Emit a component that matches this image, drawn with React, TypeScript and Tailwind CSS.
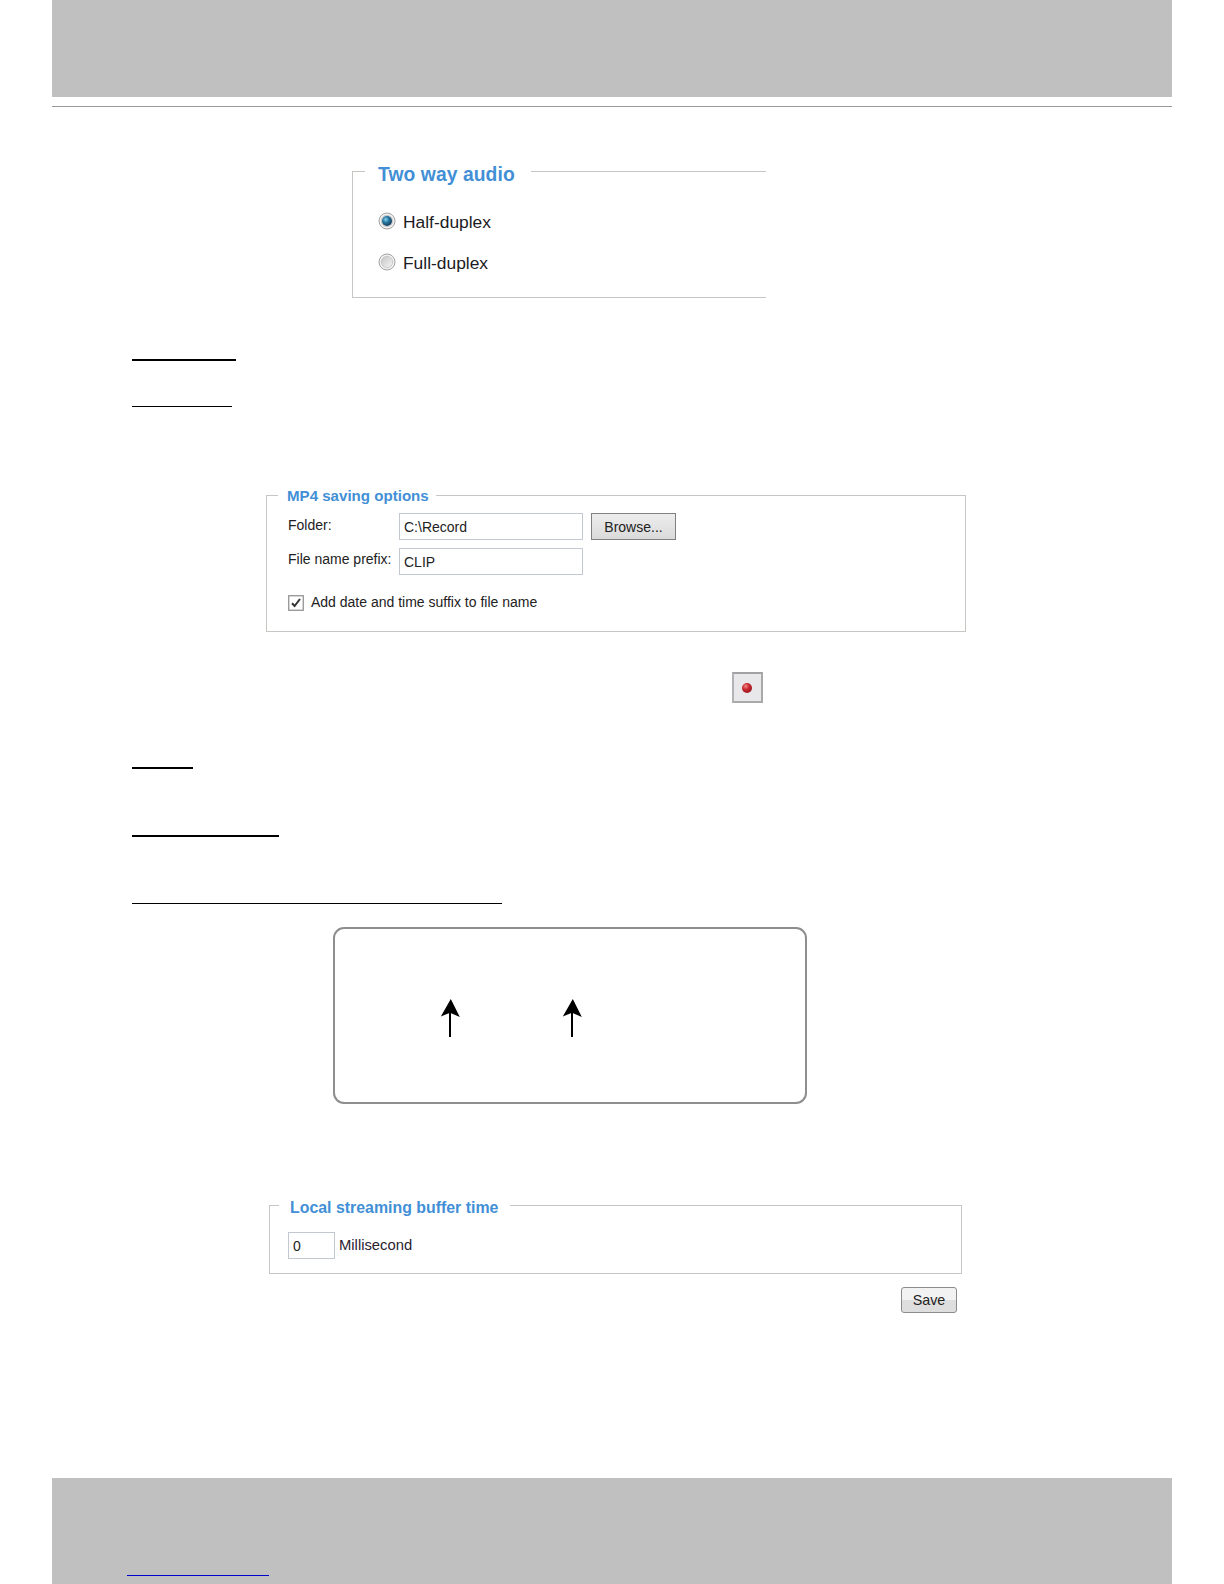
import React from 'react';

interface PanelProps {
  title: string;
  className: string;
  legendClassName: string;
  children: React.ReactNode;
}

const inputStyles = "h-[27px] border border-[#c3c7d0] bg-white px-[4px] text-[14px] leading-[20px] text-[#222] outline-none";

const Panel: React.FC<PanelProps> = ({ title, className, legendClassName, children }) => (
  <fieldset className={`border-[#c6c6c3] ${className}`}>
    <legend className={`h-[19px] whitespace-nowrap font-bold leading-[19px] text-[#428fd6] ${legendClassName}`}>{title}</legend>
    {children}
  </fieldset>
);

const Radio: React.FC<{ label: string; checked?: boolean }> = ({ label, checked }) => (
  <label className="flex h-[20px] items-center gap-[7px] text-[17.4px] leading-[20px] text-[#1c1a24]">
    <svg className="-mt-[3px] h-[18px] w-[18px]" viewBox="0 0 18 18">
      <defs>
        <radialGradient id="dot" cx="0.38" cy="0.35" r="0.65">
          <stop offset="0" stopColor="#8fd4ee" />
          <stop offset="0.45" stopColor="#2a7ca6" />
          <stop offset="1" stopColor="#153c5c" />
        </radialGradient>
        <linearGradient id="well" x1="0" y1="0" x2="1" y2="1">
          <stop offset="0" stopColor="#c4c4c4" />
          <stop offset="1" stopColor="#f6f6f6" />
        </linearGradient>
      </defs>
      <circle cx="9" cy="9" r="8" fill="#f1f1f1" stroke="#a2a2a2" />
      <circle cx="9" cy="9" r="5.7" fill="url(#well)" stroke="#c2c2c2" strokeWidth="0.8" />
      {checked && <circle cx="9" cy="9" r="5" fill="url(#dot)" />}
    </svg>
    <span className="-mt-px">{label}</span>
  </label>
);

const UpArrow: React.FC = () => (
  <svg className="h-[39px] w-[20px]" viewBox="0 0 20 39">
    <path d="M10.8 0L19.8 18L10 13.8L0.8 17.4Z" fill="#000" />
    <path d="M10 12V38" stroke="#000" strokeWidth="2" />
  </svg>
);

export default function App() {
  return (
    <div className="flex h-[1584px] w-[1224px] flex-col items-start overflow-hidden bg-white font-['Liberation_Sans',Arial,sans-serif]">
      <header className="ml-[52px] h-[97px] w-[1120px] bg-[#c0c0c0]" />
      <hr className="ml-[52px] mt-[9px] h-px w-[1120px] border-0 bg-[#999]" />

      <Panel
        title="Two way audio"
        className="ml-[352px] mt-[55px] h-[136px] w-[414px] border border-r-0"
        legendClassName="ml-[12px] w-[166px] pl-[13px] pt-[3px] text-[19.3px] tracking-[0.08px]"
      >
        <div className="ml-[25px] mt-[31px] flex flex-col gap-[21px]">
          <Radio label="Half-duplex" checked />
          <Radio label="Full-duplex" />
        </div>
      </Panel>

      <hr className="ml-[132px] mt-[61px] h-[2px] w-[104px] border-0 bg-black" />
      <hr className="ml-[132px] mt-[45px] h-px w-[100px] border-0 bg-black" />

      <Panel
        title="MP4 saving options"
        className="ml-[266px] mt-[79px] h-[146px] w-[700px] border"
        legendClassName="ml-[11px] w-[158px] pl-[9px] text-[15.1px]"
      >
        <div className="ml-[21px] mt-[8px] flex flex-col gap-[8px] text-[14px] text-[#222]">
          <div className="flex h-[27px] items-center">
            <label className="-mt-[3px] w-[111px] leading-[20px]">Folder:</label>
            <input type="text" defaultValue="C:\Record" className={`w-[184px] ${inputStyles}`} />
            <button className="ml-[8px] h-[27px] w-[85px] border border-[#808080] bg-linear-to-b from-[#ededed] to-[#dadada] pt-px">
              Browse...
            </button>
          </div>
          <div className="flex h-[27px] items-center">
            <label className="-mt-[5px] w-[111px] whitespace-nowrap leading-[20px]">File name prefix:</label>
            <input type="text" defaultValue="CLIP" className={`w-[184px] ${inputStyles}`} />
          </div>
        </div>
        <label className="ml-[21px] mt-[18px] flex h-[20px] items-center gap-[7px] text-[14px] leading-[20px] text-[#222]">
          <svg className="h-[16px] w-[16px]" viewBox="0 0 16 16">
            <rect x="0.75" y="0.75" width="14.5" height="14.5" fill="#fff" stroke="#8a8a8a" strokeWidth="1.2" />
            <path d="M4 8.2L6.6 11L12 4" fill="none" stroke="#333" strokeWidth="2" />
          </svg>
          <span className="-mt-[2px]">Add date and time suffix to file name</span>
        </label>
      </Panel>

      <button className="ml-[732px] mt-[40px] flex h-[31px] w-[31px] items-center justify-center border-2 border-b-[#a9a9a9] border-l-[#b0b2b4] border-r-[#a9a9a9] border-t-[#a0a2a4] bg-[#e8e8ea] pr-px">
        <svg className="h-[12px] w-[12px]" viewBox="0 0 12 12">
          <defs>
            <radialGradient id="rec" cx="0.38" cy="0.32" r="0.7">
              <stop offset="0" stopColor="#ef8a8a" />
              <stop offset="0.45" stopColor="#cc2b33" />
              <stop offset="1" stopColor="#9c1420" />
            </radialGradient>
          </defs>
          <circle cx="6" cy="6" r="5" fill="url(#rec)" />
        </svg>
      </button>

      <hr className="ml-[132px] mt-[64px] h-[2px] w-[61px] border-0 bg-black" />
      <hr className="ml-[132px] mt-[66px] h-[2px] w-[147px] border-0 bg-black" />
      <hr className="ml-[132px] mt-[66px] h-px w-[370px] border-0 bg-black" />

      <div className="ml-[333px] mt-[23px] flex h-[177px] w-[474px] gap-[102px] rounded-[11px] border-2 border-[#8e8e8e] pl-[105px] pt-[70px]">
        <UpArrow />
        <UpArrow />
      </div>

      <Panel
        title="Local streaming buffer time"
        className="ml-[269px] mt-[92px] h-[78px] w-[693px] border"
        legendClassName="ml-[9px] w-[231px] pl-[11px] pt-[2px] text-[15.9px]"
      >
        <label className="ml-[18px] mt-[17px] flex h-[27px] items-center gap-[4px] text-[14.8px] leading-[20px] text-[#2a2230]">
          <input type="text" defaultValue="0" className={`w-[47px] ${inputStyles}`} />
          <span className="-mt-[2px]">Millisecond</span>
        </label>
      </Panel>

      <button className="ml-[901px] mt-[13px] h-[26px] w-[56px] rounded-[3px] border border-[#8b8b8b] bg-linear-to-b from-[#f2f2f2] from-50% to-[#dedede] to-50% text-[14.3px] leading-[22px] text-[#222]">
        Save
      </button>

      <footer className="ml-[52px] mt-[165px] h-[106px] w-[1120px] bg-[#c0c0c0] pl-[75px] pt-[97px]">
        <div className="h-px w-[142px] bg-[#0000cc]" />
      </footer>
    </div>
  );
}
